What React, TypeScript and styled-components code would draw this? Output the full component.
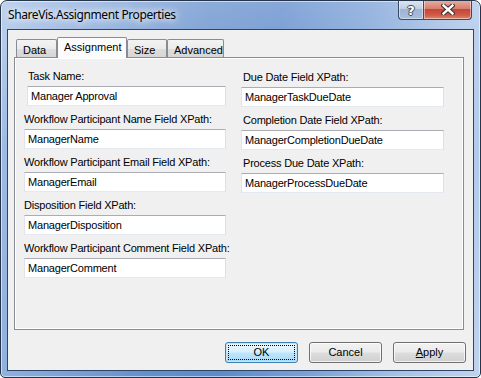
import React from "react";
import styled, { createGlobalStyle, css } from "styled-components";

const GlobalStyle = createGlobalStyle`
  html, body { margin: 0; padding: 0; background: #ffffff; }
  body { font-family: "Liberation Sans", Arial, sans-serif; font-size: 11px; color: #000; }
  * { box-sizing: border-box; }
`;

const Window = styled.div`
  width: 481px;
  height: 378px;
  border: 1px solid #27354a;
  border-radius: 7px 7px 5px 5px;
  background:
    linear-gradient(180deg, rgba(255,255,255,0.25) 0%, rgba(255,255,255,0) 40%),
    linear-gradient(100deg, #a7c2e6 0%, #86a9db 18%, #6690cc 38%, #5e8acb 52%, #7aa0d6 68%, #a9c3e8 86%, #bfd3ee 100%);
  box-shadow: inset 0 0 0 1px rgba(255, 255, 255, 0.55);
  display: flex;
  flex-direction: column;
  overflow: hidden;
`;

const TitleBar = styled.div`
  height: 28px;
  display: flex;
  justify-content: space-between;
  align-items: flex-start;
  padding-left: 7px;
`;

const TitleText = styled.div`
  font-family: "Noto Sans", "Open Sans", sans-serif;
  font-size: 12px;
  letter-spacing: -0.4px;
  line-height: 16px;
  margin-top: 6px;
  color: #000;
  text-shadow: 0 0 6px rgba(255,255,255,0.95), 0 0 10px rgba(255,255,255,0.8), 0 0 14px rgba(255,255,255,0.6);
`;

const CaptionGroup = styled.div`
  display: flex;
  margin-top: -1px;
  margin-right: 8px;
`;

const CaptionButton = styled.div<{ $kind: "help" | "close" }>`
  height: 20px;
  display: flex;
  align-items: center;
  justify-content: center;
  border: 1px solid #3b4b63;
  border-top: none;
  box-shadow: inset 0 0 0 1px rgba(255,255,255,0.45);
  ${(p) =>
    p.$kind === "help"
      ? css`
          width: 25px;
          border-right: none;
          border-radius: 0 0 0 4px;
          background: linear-gradient(180deg, #dfe8f3 0%, #bfcfe4 45%, #9fb5d3 50%, #a7bedc 100%);
        `
      : css`
          width: 49px;
          border-radius: 0 0 4px 0;
          background: linear-gradient(180deg, #eab0a3 0%, #d8806e 45%, #c7443a 50%, #cf5b48 80%, #de8a6e 100%);
        `}
`;

const HelpGlyph = styled.span`
  font-family: "DejaVu Sans", sans-serif;
  font-weight: bold;
  font-size: 13px;
  line-height: 13px;
  color: #fff;
  margin-top: 1px;
  text-shadow: 1px 0 0 #39465a, -1px 0 0 #39465a, 0 1px 0 #39465a, 0 -1px 0 #39465a;
`;

const Client = styled.div`
  flex: 1;
  margin: 0 6px 6px 6px;
  border: 1px solid #2f4566;
  background: #f0f0f0;
  padding: 7px 7px 0 6px;
  display: flex;
  flex-direction: column;
`;

const TabControl = styled.div`
  width: 450px;
  display: flex;
  flex-direction: column;
`;

const TabStrip = styled.div`
  height: 20px;
  display: flex;
  align-items: flex-end;
  padding-left: 2px;
  position: relative;
  z-index: 1;
`;

const Tab = styled.div<{ $w: number; $active?: boolean }>`
  width: ${(p) => p.$w}px;
  border: 1px solid #898c95;
  border-bottom: none;
  border-radius: 2px 2px 0 0;
  padding-left: 6px;
  ${(p) =>
    p.$active
      ? css`
          height: 21px;
          margin-bottom: -1px;
          background: #fbfbfb;
          line-height: 16px;
          padding-top: 1px;
        `
      : css`
          height: 18px;
          background: linear-gradient(180deg, #f3f3f3 0%, #ebebeb 50%, #dedede 51%, #d6d6d6 100%);
          line-height: 18px;
          padding-top: 1px;
        `}
`;

const Panel = styled.div`
  height: 273px;
  border: 1px solid #898c95;
  background: #f0f0f0;
  box-shadow: inset 0 0 0 1px #ffffff;
  display: grid;
  grid-template-columns: 202px 203px;
  column-gap: 15px;
  align-items: start;
  padding: 12px 0 0 9px;
`;

const Column = styled.div<{ $top?: number }>`
  display: flex;
  flex-direction: column;
  gap: 7px;
  padding-top: ${(p) => p.$top ?? 0}px;
`;

const FieldRow = styled.div<{ $indent?: number }>`
  display: flex;
  flex-direction: column;
  gap: 3px;
  padding-left: ${(p) => p.$indent ?? 0}px;
`;

const Label = styled.div<{ $indent?: number }>`
  line-height: 13px;
  height: 13px;
  white-space: nowrap;
  letter-spacing: -0.2px;
  padding-left: ${(p) => p.$indent ?? 0}px;
`;

const TextBox = styled.div`
  height: 20px;
  background: #ffffff;
  border: 1px solid;
  border-color: #abadb3 #dbdfe6 #e3e9ef #e2e3ea;
  padding: 0 3px;
  line-height: 18px;
  white-space: nowrap;
  letter-spacing: -0.2px;
`;

const ButtonRow = styled.div`
  display: flex;
  justify-content: flex-end;
  gap: 11px;
  margin-top: 12px;
`;

const Button = styled.div<{ $default?: boolean }>`
  width: 73px;
  height: 21px;
  border: 1px solid #707070;
  border-radius: 3px;
  background: linear-gradient(180deg, #f2f2f2 0%, #ebebeb 48%, #dddddd 52%, #cfcfcf 100%);
  box-shadow: inset 0 0 0 1px rgba(255,255,255,0.75);
  display: flex;
  align-items: center;
  justify-content: center;
  line-height: 13px;
  position: relative;
  ${(p) =>
    p.$default &&
    css`
      border-color: #3c7fb1;
      background: linear-gradient(180deg, #eaf6fd 0%, #d9f0fc 48%, #bee6fd 52%, #a7d9f5 100%);
      box-shadow: inset 0 0 0 1px #c4e5f6;
    `}
`;

const FocusRect = styled.div`
  position: absolute;
  inset: 2px;
  border: 1px dotted #000;
`;

const ButtonText = styled.span``;

const leftFields = [
  { label: "Task Name:", value: "Manager Approval", indent: 3 },
  { label: "Workflow Participant Name Field XPath:", value: "ManagerName" },
  { label: "Workflow Participant Email Field XPath:", value: "ManagerEmail" },
  { label: "Disposition Field XPath:", value: "ManagerDisposition" },
  { label: "Workflow Participant Comment Field XPath:", value: "ManagerComment" },
];

const rightFields = [
  { label: "Due Date Field XPath:", value: "ManagerTaskDueDate" },
  { label: "Completion Date Field XPath:", value: "ManagerCompletionDueDate" },
  { label: "Process Due Date XPath:", value: "ManagerProcessDueDate" },
];

const CloseIcon = () => (
  <svg width="14" height="11" viewBox="0 0 14 11">
    <path d="M2.5 1.5 L11.5 9.5 M11.5 1.5 L2.5 9.5" stroke="#3a2a2a" strokeWidth="4.4" strokeLinecap="square" />
    <path d="M2.5 1.5 L11.5 9.5 M11.5 1.5 L2.5 9.5" stroke="#ffffff" strokeWidth="2.4" strokeLinecap="square" />
  </svg>
);

export default function App() {
  return (
    <>
      <GlobalStyle />
      <Window>
        <TitleBar>
          <TitleText>ShareVis.Assignment Properties</TitleText>
          <CaptionGroup>
            <CaptionButton $kind="help">
              <HelpGlyph>?</HelpGlyph>
            </CaptionButton>
            <CaptionButton $kind="close">
              <CloseIcon />
            </CaptionButton>
          </CaptionGroup>
        </TitleBar>
        <Client>
          <TabControl>
            <TabStrip>
              <Tab $w={41}>Data</Tab>
              <Tab $w={70} $active>Assignment</Tab>
              <Tab $w={40}>Size</Tab>
              <Tab $w={57}>Advanced</Tab>
            </TabStrip>
            <Panel>
              <Column>
                {leftFields.map((f) => (
                  <FieldRow key={f.label} $indent={f.indent}>
                    <Label $indent={f.indent ? 1 : 0}>{f.label}</Label>
                    <TextBox>{f.value}</TextBox>
                  </FieldRow>
                ))}
              </Column>
              <Column $top={1}>
                {rightFields.map((f) => (
                  <FieldRow key={f.label}>
                    <Label $indent={2}>{f.label}</Label>
                    <TextBox>{f.value}</TextBox>
                  </FieldRow>
                ))}
              </Column>
            </Panel>
          </TabControl>
          <ButtonRow>
            <Button $default>
              <FocusRect />
              OK
            </Button>
            <Button>Cancel</Button>
            <Button>
              <ButtonText>
                <u>A</u>pply
              </ButtonText>
            </Button>
          </ButtonRow>
        </Client>
      </Window>
    </>
  );
}
